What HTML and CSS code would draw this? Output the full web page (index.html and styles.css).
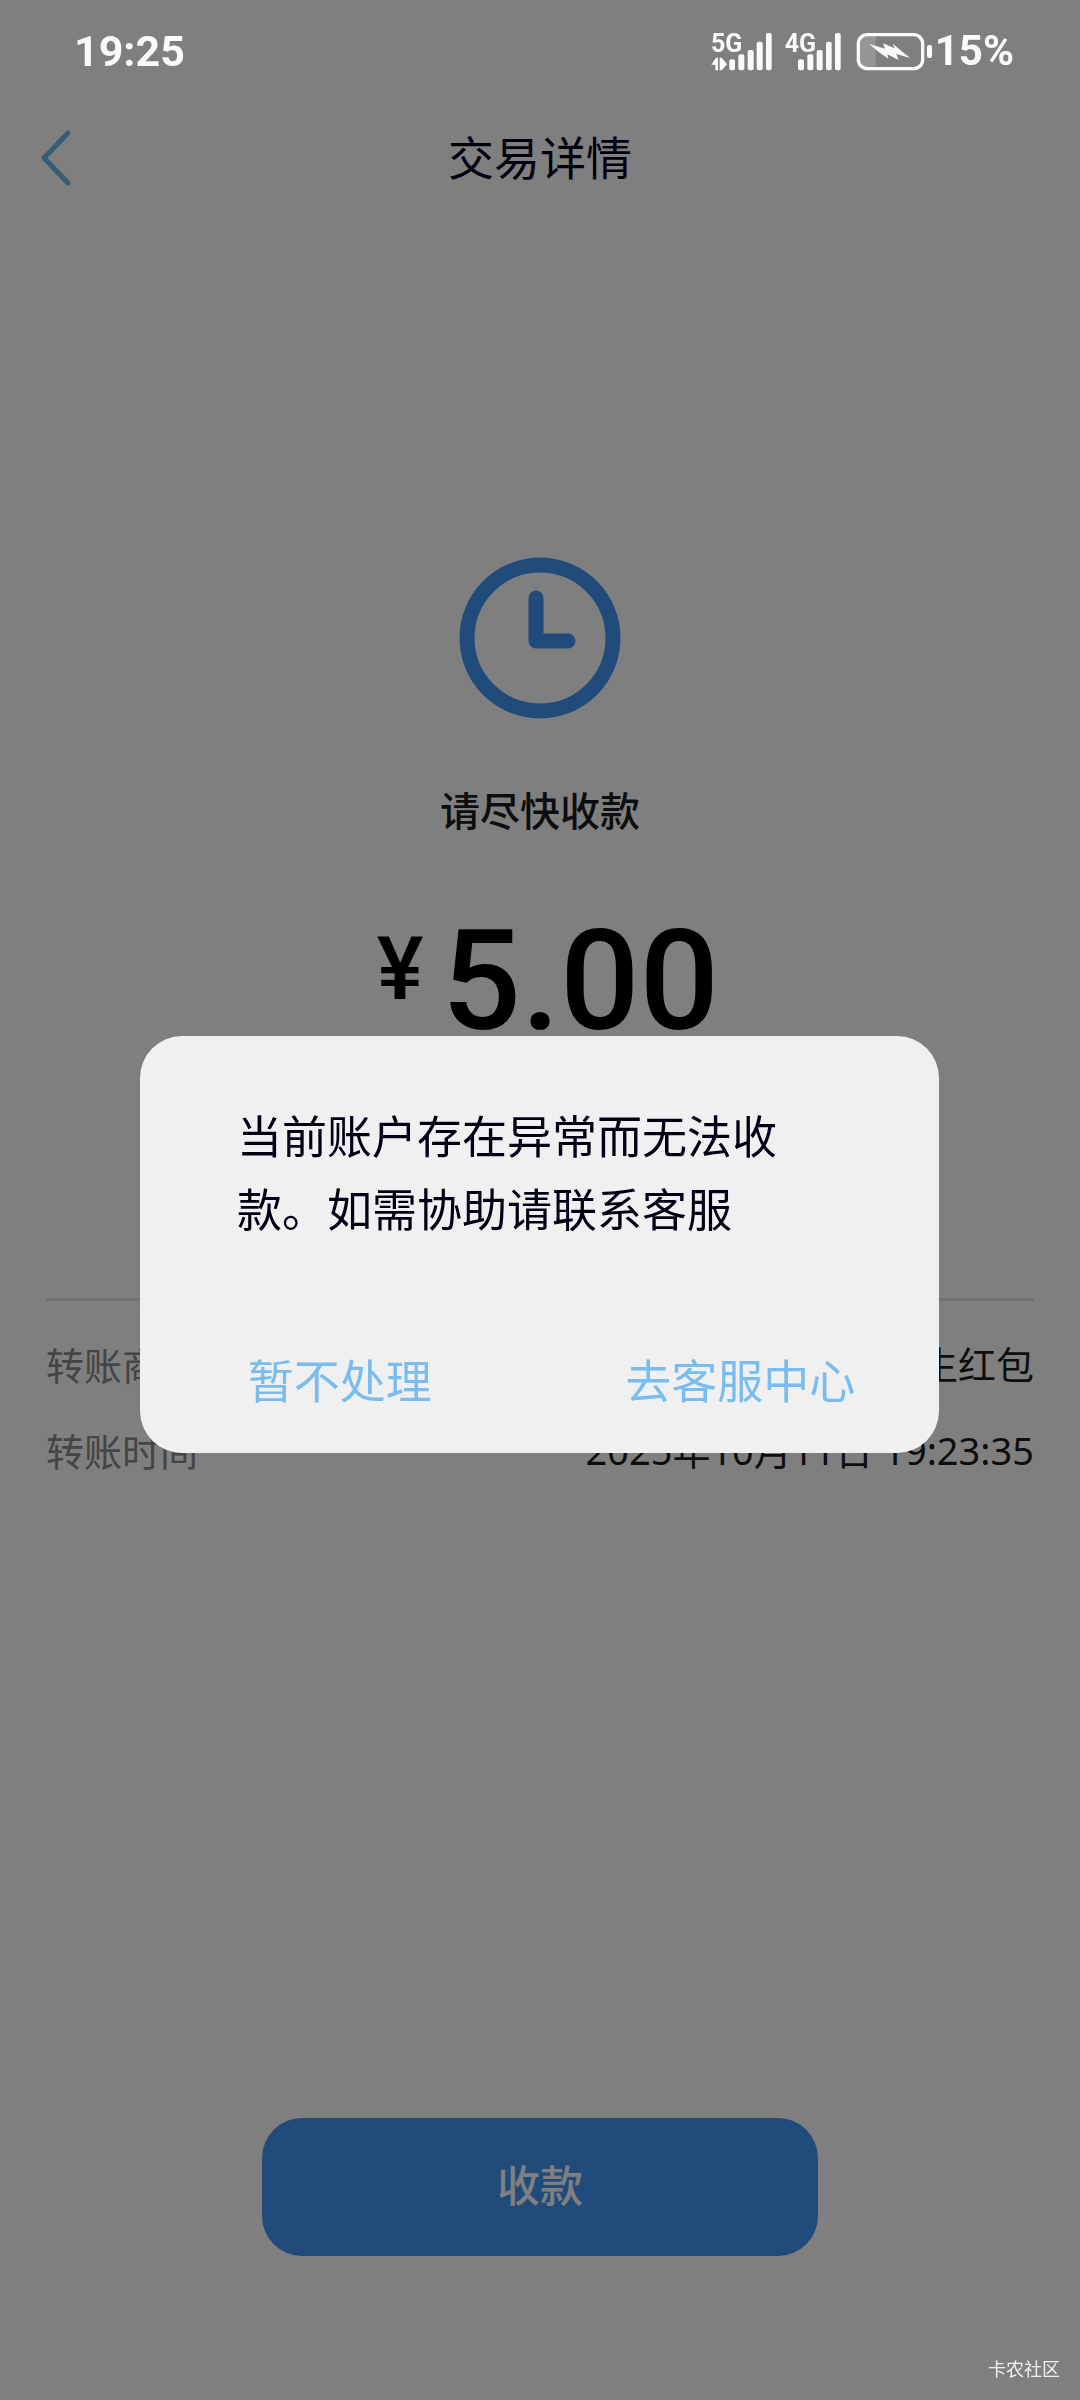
FILE: index.html
```html
<!DOCTYPE html>
<html lang="zh-CN">
<head>
<meta charset="utf-8">
<meta name="viewport" content="width=device-width, initial-scale=1">
<title>交易详情</title>
<link rel="stylesheet" href="styles.css">
</head>
<body>
<div class="status-bar">
  <time class="status-time">19:25</time>
  <div class="status-icons">
    <svg class="sim-one" viewBox="76 39 183 165" role="img" aria-label="5G">
      <text class="network" x="76" y="122">5G</text>
      <path d="M77 161 91 140h6v38h-8v-17zM102 140h6l16 20-16 18h-6z"/>
      <rect x="131" y="145" width="17" height="33" rx="6"/>
      <rect x="158" y="130" width="18" height="48" rx="6"/>
      <rect x="186" y="117" width="18" height="61" rx="6"/>
      <rect x="213" y="92" width="18" height="86" rx="6"/>
      <rect x="241" y="66" width="17" height="112" rx="6"/>
    </svg>
    <svg class="sim-two" viewBox="292 39 174 165" role="img" aria-label="4G">
      <text class="network" x="294" y="122">4G</text>
      <rect x="334" y="145" width="18" height="33" rx="6"/>
      <rect x="362" y="130" width="18" height="48" rx="6"/>
      <rect x="390" y="117" width="18" height="61" rx="6"/>
      <rect x="418" y="92" width="17" height="86" rx="6"/>
      <rect x="445" y="66" width="17" height="112" rx="6"/>
    </svg>
    <svg class="battery" viewBox="507 63 231 117" role="img" aria-label="正在充电">
      <path class="battery-level" d="M540 72h26v100h-26q-26 0-26-28v-44q0-28 26-28z"/>
      <rect class="battery-case" x="514" y="71" width="193" height="102" rx="27"/>
      <rect x="720" y="102" width="15" height="39" rx="6"/>
      <path d="M547 99 594 113 588 97 623 112 617 98 646 122 670 141 628 129 635 147 601 130 604 143 575 123z"/>
    </svg>
    <span class="status-percent">15%</span>
  </div>
</div>

<div class="page">
  <header class="nav">
    <button class="back" type="button" aria-label="返回">
      <svg class="back-icon" viewBox="0 0 32 56"><path d="M28 3 4 28 28 53"/></svg>
    </button>
    <h1 class="nav-title">交易详情</h1>
  </header>

  <main class="content">
    <svg class="clock" viewBox="0 0 162 162" aria-hidden="true">
      <circle cx="81" cy="81" r="73"/>
      <path d="M77 41V84H109"/>
    </svg>
    <p class="state">请尽快收款</p>
    <p class="amount"><span class="currency">¥</span><span>5.00</span></p>
    <dl class="details">
      <div class="detail"><dt>转账商户</dt><dd>生红包</dd></div>
      <div class="detail"><dt>转账时间</dt><dd>2025年10月11日 19:23:35</dd></div>
    </dl>
  </main>

  <button class="collect" type="button">收款</button>
</div>

<div class="overlay">
  <div class="dialog" role="alertdialog" aria-modal="true" aria-describedby="message">
    <p class="message" id="message">当前账户存在异常而无法收款。如需协助请联系客服</p>
    <div class="actions">
      <button class="action" type="button">暂不处理</button>
      <button class="action" type="button">去客服中心</button>
    </div>
  </div>
</div>
<span class="watermark">卡农社区</span>
</body>
</html>
```
FILE: styles.css
```css
* {
  box-sizing: border-box;
}

body,
h1,
p,
dl,
dd {
  margin: 0;
}

body {
  background: #fff;
  font-family: "Noto Sans CJK SC", sans-serif;
  color: #1c1c1c;
}

button {
  padding: 0;
  border: 0;
  background: none;
  font: inherit;
  color: inherit;
}

svg {
  display: block;
}

/* System status bar, drawn above the dimmed page */
.status-bar {
  position: fixed;
  inset: 0 0 auto;
  z-index: 3;
  display: flex;
  align-items: center;
  justify-content: space-between;
  height: 102px;
  padding: 0 66px 0 74px;
  font-family: Roboto, sans-serif;
  font-size: 43px;
  font-weight: 700;
  line-height: 52px;
  color: #fafafa;
}

.status-icons {
  display: flex;
  align-items: center;
  fill: #fafafa;
}

.sim-one {
  width: 61px;
  height: 55px;
}

.sim-two {
  width: 58px;
  height: 55px;
  margin: 0 14px 0 12px;
}

.battery {
  width: 77px;
  height: 39px;
  margin-right: 2px;
}

.status-percent {
  font-size: 42px;
}

.network {
  font-family: Roboto, sans-serif;
  font-size: 75px;
  font-weight: 700;
}

.battery-case {
  fill: none;
  stroke: #fafafa;
  stroke-width: 10;
}

.battery-level {
  fill: #969696;
}

/* Page */
.page {
  display: flex;
  flex-direction: column;
  min-height: 100vh;
  padding: 102px 0 144px;
}

.nav {
  display: grid;
  grid-template-columns: 112px 1fr 112px;
  align-items: center;
  height: 112px;
}

.back {
  padding-left: 40px;
}

.back-icon {
  width: 32px;
  height: 56px;
  fill: none;
  stroke: #6eb8ee;
  stroke-width: 5;
  stroke-linecap: round;
  stroke-linejoin: round;
}

.nav-title {
  padding-bottom: 6px;
  font-size: 46px;
  font-weight: 400;
  line-height: 64px;
  text-align: center;
  color: #000018;
}

.content {
  display: flex;
  flex: 1;
  flex-direction: column;
  align-items: center;
  padding: 343px 46px 0;
}

.clock {
  width: 162px;
  height: 162px;
  fill: none;
  stroke: #4096f6;
  stroke-width: 15;
  stroke-linecap: round;
  stroke-linejoin: round;
}

.state {
  margin-top: 60px;
  font-size: 40px;
  font-weight: 500;
  line-height: 60px;
}

.amount {
  display: flex;
  align-items: flex-start;
  gap: 18px;
  margin-top: 60px;
  padding-left: 16px;
  font-family: Roboto, sans-serif;
  font-size: 140px;
  font-weight: 500;
  line-height: 164px;
  color: #000;
}

.currency {
  font-size: 88px;
  line-height: 140px;
}

.details {
  display: flex;
  flex-direction: column;
  gap: 30px;
  align-self: stretch;
  margin-top: 235px;
  padding-top: 35px;
  border-top: 3px solid #e4e4e4;
  font-size: 38px;
  line-height: 56px;
}

.detail {
  display: flex;
  justify-content: space-between;
}

.detail dt {
  color: #8a8a8a;
}

.detail dd {
  font-family: "Noto Sans", "Noto Sans CJK SC", sans-serif;
}

.collect {
  align-self: center;
  width: 556px;
  max-width: 90%;
  height: 138px;
  padding-bottom: 8px;
  border-radius: 40px;
  background: #4096f6;
  font-size: 43px;
  font-weight: 500;
  color: #fff;
}

/* Dialog */
.overlay {
  position: fixed;
  inset: 0;
  z-index: 2;
  display: flex;
  align-items: center;
  justify-content: center;
  padding: 89px 141px 0 140px;
  background: rgba(0, 0, 0, 0.5);
}

.dialog {
  width: 100%;
  overflow: hidden;
  border-radius: 42px;
  background: #f0f0f0;
}

.message {
  padding: 62px 97px 60px;
  font-size: 45px;
  line-height: 73px;
  color: #000014;
}

.actions {
  display: grid;
  grid-template-columns: minmax(0, 1fr) minmax(0, 1fr);
  border-top: 3px solid #eeeeee;
}

.action {
  height: 146px;
  padding-bottom: 4px;
  font-size: 46px;
  color: #78bcf0;
}

.action + .action {
  border-left: 2px solid #eeeeee;
}

.watermark {
  position: fixed;
  right: 20px;
  bottom: 18px;
  z-index: 3;
  font-size: 18px;
  line-height: 28px;
  color: #f0f0f0;
}
```
